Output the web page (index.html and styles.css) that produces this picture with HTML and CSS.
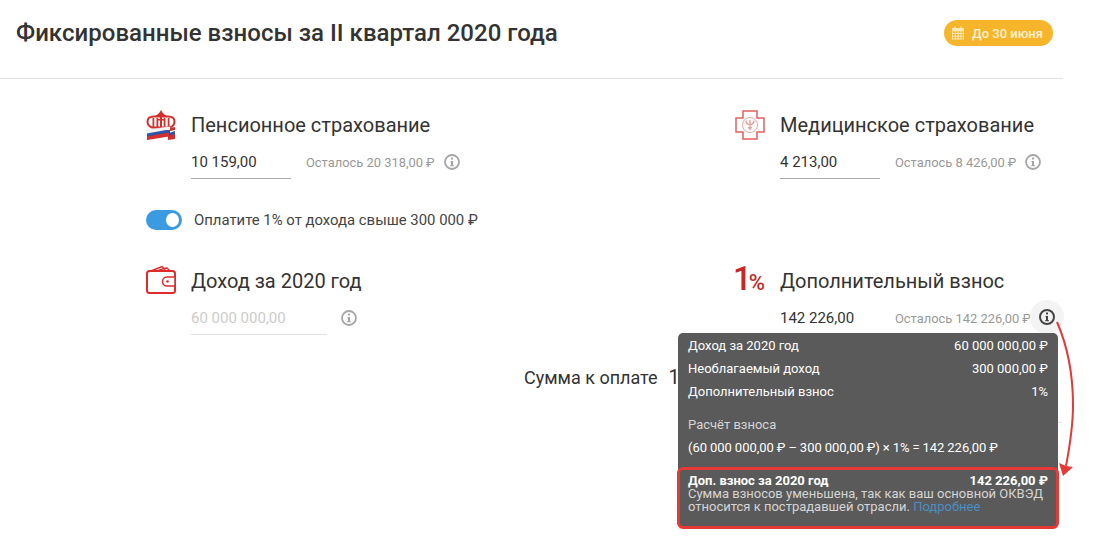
FILE: index.html
```html
<!DOCTYPE html>
<html lang="ru">
<head>
    <meta charset="UTF-8">
    <meta name="viewport" content="width=device-width, initial-scale=1.0">
    <title>Фиксированные взносы</title>
    <link rel="stylesheet" href="styles.css">
</head>
<body>
    <div class="page">
        <div class="header">
            <h1 class="header-title">Фиксированные взносы за II квартал 2020 года</h1>
            <div class="deadline">
                <svg class="deadline-icon" viewBox="0 0 13 14" width="12" height="14">
                    <path fill="#fde9b8" d="M2.500 0h1.400v1.500h5.200V0h1.400v1.500H13V14H0V1.500h2.500zM1 5v2h2.200V5zm3.200 0v2h2V5zm3 0v2h2V5zm3 0v2H12V5zM1 8v2h2.200V8zm3.200 0v2h2V8zm3 0v2h2V8zm3 0v2H12V8zM1 11v2h2.200v-2zm3.200 0v2h2v-2zm3 0v2h2v-2zm3 0v2H12v-2z"/>
                </svg>
                До 30 июня
            </div>
        </div>

        <div class="form">
            <div class="form-row">
                <div class="block">
                    <div class="block-head">
                        <svg class="block-icon" viewBox="0 0 30 30" width="30" height="30">
                            <path fill="none" stroke="#d32f2f" stroke-width="2" d="M8 6.500h14c4 0 6.500 2 6.500 5s-2 5-4.500 6H6c-2.500-1-4.500-3-4.500-6s2.500-5 6.500-5z"/>
                            <path fill="#d32f2f" d="M15 0l1.500 2.500c1 1.500 3 2.500 5 4h-13c2-1.500 4-2.500 5-4zM6.500 8h1.800v9H6.500zM10.500 8h1.800v9h-1.800zM17.700 8h1.800v9h-1.800zM21.700 8h1.800v9h-1.800zM14 7h2v10h-2zM12 9h6v1.500h-6z"/>
                            <path fill="#f4f4f4" stroke="#e5e5e5" stroke-width=".5" d="M1 20.500l19-3.500h4v3.500L1 24z"/>
                            <path fill="#2f55a4" d="M1 23.500L20 20h4v3.500L1 27z"/>
                            <path fill="#d32f2f" d="M1 26.500L20 23h3v3.500L1 30z"/>
                            <path fill="#d32f2f" d="M24 18l5-1v3l-5 1zM22 24l7-2v7l-7 1z"/>
                            <path fill="#2f55a4" d="M23 23l6-2v3l-6 2z"/>
                        </svg>
                        <div class="block-title">Пенсионное страхование</div>
                    </div>
                    <div class="block-body">
                        <div class="amount">10 159,00</div>
                        <div class="left-note">Осталось 20 318,00 ₽</div>
                        <svg class="info" viewBox="0 0 16 16" width="16" height="16">
                            <circle cx="8" cy="8" r="7" fill="none" stroke="currentColor" stroke-width="1.800"/>
                            <path fill="currentColor" d="M7 3.500h2v2H7zM6.500 7H9v4h.8v1.200H6.300V11H7V8.200h-.5z"/>
                        </svg>
                    </div>
                </div>
                <div class="block">
                    <div class="block-head">
                        <svg class="block-icon" viewBox="0 0 30 30" width="30" height="30">
                            <path fill="none" stroke="#e4605f" stroke-width="1.500" d="M8 1h14v7h7v14h-7v7H8v-7H1V8h7z"/>
                            <circle cx="15" cy="15" r="7.500" fill="none" stroke="#f0a5a4" stroke-width="1"/>
                            <path fill="none" stroke="#ea8d8c" stroke-width="1.200" d="M15 10v10M11 10.500c0 3 1.500 4 4 4s4-1 4-4M13 17.500c1 .7 3 .7 4 0"/>
                        </svg>
                        <div class="block-title">Медицинское страхование</div>
                    </div>
                    <div class="block-body">
                        <div class="amount">4 213,00</div>
                        <div class="left-note">Осталось 8 426,00 ₽</div>
                        <svg class="info" viewBox="0 0 16 16" width="16" height="16">
                            <circle cx="8" cy="8" r="7" fill="none" stroke="currentColor" stroke-width="1.800"/>
                            <path fill="currentColor" d="M7 3.500h2v2H7zM6.500 7H9v4h.8v1.200H6.300V11H7V8.200h-.5z"/>
                        </svg>
                    </div>
                </div>
            </div>

            <div class="toggle-row">
                <div class="toggle"><span class="toggle-knob"></span></div>
                <div class="toggle-label">Оплатите 1% от дохода свыше 300 000 ₽</div>
            </div>

            <div class="form-row">
                <div class="block">
                    <div class="block-head">
                        <svg class="block-icon" viewBox="0 0 30 30" width="30" height="30">
                            <rect x="1" y="5" width="28" height="22" rx="2.500" fill="none" stroke="#e02b2b" stroke-width="2"/>
                            <path fill="none" stroke="#e02b2b" stroke-width="1.400" d="M5 5l11-4.500 2 2 3-.5 3 3M11 5l7-2.500 2 2.500"/>
                            <path fill="#fff" stroke="#e02b2b" stroke-width="1.500" d="M29 11h-8a3.500 3.500 0 0 0 0 9h8z"/>
                            <circle cx="21.500" cy="15.500" r="1.300" fill="#e02b2b"/>
                        </svg>
                        <div class="block-title">Доход за 2020 год</div>
                    </div>
                    <div class="block-body">
                        <div class="amount amount-empty">60 000 000,00</div>
                        <svg class="info" viewBox="0 0 16 16" width="16" height="16">
                            <circle cx="8" cy="8" r="7" fill="none" stroke="currentColor" stroke-width="1.800"/>
                            <path fill="currentColor" d="M7 3.500h2v2H7zM6.500 7H9v4h.8v1.200H6.300V11H7V8.200h-.5z"/>
                        </svg>
                    </div>
                </div>
                <div class="block">
                    <div class="block-head">
                        <div class="percent-icon">1<span>%</span></div>
                        <div class="block-title">Дополнительный взнос</div>
                    </div>
                    <div class="block-body">
                        <div class="amount amount-plain">142 226,00</div>
                        <div class="left-note">Осталось 142 226,00 ₽</div>
                        <div class="info-active">
                            <svg class="info info-dark" viewBox="0 0 16 16" width="16" height="16">
                                <circle cx="8" cy="8" r="7" fill="none" stroke="currentColor" stroke-width="2"/>
                                <path fill="currentColor" d="M7 3.500h2v2H7zM6.500 7H9v4h.8v1.200H6.300V11H7V8.200h-.5z"/>
                            </svg>
                        </div>
                    </div>
                </div>
            </div>

            <div class="total">
                <span class="total-label">Сумма к оплате</span>
                <span class="total-value">156 598,00 ₽</span>
            </div>
            <div class="total-line"></div>
        </div>

        <!-- подсказка поверх формы -->
        <div class="tooltip">
            <div class="tooltip-row"><span>Доход за 2020 год</span><span>60 000 000,00 ₽</span></div>
            <div class="tooltip-row"><span>Необлагаемый доход</span><span>300 000,00 ₽</span></div>
            <div class="tooltip-row"><span>Дополнительный взнос</span><span>1%</span></div>
            <div class="tooltip-calc-title">Расчёт взноса</div>
            <div class="tooltip-calc">(60 000 000,00 ₽ – 300 000,00 ₽) × 1% = 142 226,00 ₽</div>
            <div class="tooltip-result">
                <div class="tooltip-sum"><span>Доп. взнос за 2020 год</span><span>142 226,00 ₽</span></div>
                <div class="tooltip-note">Сумма взносов уменьшена, так как ваш основной ОКВЭД относится к пострадавшей отрасли. <a class="tooltip-link" href="#">Подробнее</a></div>
            </div>
        </div>

        <!-- красная стрелка-пометка -->
        <svg class="arrow" viewBox="0 0 30 170" width="30" height="170">
            <path fill="none" stroke="#e53935" stroke-width="2" d="M2 2C12 25 18 55 18 85 18 105 15 125 11 146"/>
            <path fill="#e53935" d="M4 143l7 3 7 1-10 9z"/>
        </svg>
    </div>
</body>
</html>
```

FILE: styles.css
```css
* {
    margin: 0;
    padding: 0;
    box-sizing: border-box;
}

body {
    font-family: Roboto, "Liberation Sans", sans-serif;
    background: white;
    color: #333;
    overflow: hidden;
}

.page {
    width: 1063px;
    height: 548px;
    position: relative;
    overflow: visible;
}

.header {
    height: 79px;
    padding: 0 10px 12px 16px;
    border-bottom: 1px solid #e3e3e3;
    display: flex;
    justify-content: space-between;
    align-items: center;
}

.header-title {
    font-size: 24px;
    font-weight: 500;
    letter-spacing: 0.02px;
    color: #333;
}

.deadline {
    height: 26px;
    padding: 0 10px 0 8px;
    border-radius: 13px;
    background: #f7b52c;
    color: #fdf1d2;
    font-size: 13px;
    font-weight: 500;
    display: flex;
    align-items: center;
    gap: 8px;
}

.form {
    padding: 31px 0 0 146px;
}

.form-row {
    display: flex;
}

.block {
    flex: 0 0 589px;
}

.block + .block {
    flex: 1;
    min-width: 0;
}

.block-head {
    height: 30px;
    display: flex;
    align-items: center;
    gap: 15px;
}

.block-icon {
    flex: none;
}

.block-title {
    font-size: 20px;
    color: #333;
}

.block-body {
    margin-top: 7px;
    padding-left: 45px;
    height: 40px;
    display: flex;
    align-items: flex-start;
    position: relative;
}

.amount {
    flex: none;
    width: 100px;
    height: 32px;
    padding-top: 6px;
    font-size: 15px;
    line-height: 18px;
    color: #333;
    border-bottom: 1px solid #aaa;
}

.amount-plain {
    border-bottom: none;
}

.amount-empty {
    width: 136px;
    color: #ccc;
    border-bottom-color: #e3e3e3;
}

.left-note {
    margin-left: 15px;
    padding-top: 7px;
    font-size: 12.900px;
    line-height: 18px;
    color: #999;
    white-space: nowrap;
}

.info {
    margin: 7px 0 0 9px;
    color: #a6a6a6;
    flex: none;
}

.amount-empty + .info {
    margin-left: 14px;
}

.info-active {
    position: absolute;
    left: 295px;
    top: -3px;
    width: 34px;
    height: 34px;
    border-radius: 50%;
    background: #f3f3f3;
    display: flex;
    align-items: center;
    justify-content: center;
}

.info-dark {
    margin: 0;
    color: #444;
}

.percent-icon {
    flex: none;
    width: 32px;
    margin-left: -2px;
    font-size: 33px;
    line-height: 30px;
    font-weight: 500;
    color: #c62828;
    letter-spacing: -3px;
    white-space: nowrap;
}

.percent-icon span {
    font-size: 22px;
    letter-spacing: 0;
}

.toggle-row {
    margin-top: 22px;
    height: 22px;
    display: flex;
    align-items: center;
    gap: 12px;
}

.toggle {
    width: 36px;
    height: 20px;
    border-radius: 10px;
    background: #3a9be0;
    position: relative;
}

.toggle-knob {
    position: absolute;
    right: 3px;
    top: 3px;
    width: 13px;
    height: 14px;
    border-radius: 50%;
    background: white;
}

.toggle-label {
    font-size: 14.900px;
    color: #444;
}

.form-row + .toggle-row + .form-row {
    margin-top: 35px;
}

.total {
    margin-top: 22px;
    padding-left: 378px;
    display: flex;
    align-items: baseline;
    gap: 11px;
    white-space: nowrap;
}

.total-label {
    font-size: 18px;
}

.total-value {
    font-size: 20px;
}

.total-line {
    height: 1px;
    margin-top: 33px;
    margin-left: 532px;
    background: #e6e6e6;
}

.tooltip {
    position: absolute;
    left: 678px;
    top: 333px;
    width: 380px;
    height: 195px;
    padding: 1px 10px 0;
    border-radius: 5px;
    background: #5a5a5a;
    color: #fff;
    font-size: 13px;
    line-height: 23px;
}

.tooltip-row {
    display: flex;
    justify-content: space-between;
}

.tooltip-calc-title {
    margin-top: 10px;
    color: #d5d5d5;
}

.tooltip-calc {
    word-spacing: -0.3px;
}

.tooltip-result {
    position: absolute;
    left: -1px;
    right: -1px;
    top: 134px;
    height: 62px;
    padding: 4px 8px 0;
    border: 3px solid #e53935;
    border-radius: 6px;
    line-height: 13px;
}

.tooltip-sum {
    display: flex;
    justify-content: space-between;
    font-weight: 700;
}

.tooltip-note {
    color: #d5d5d5;
}

.tooltip-link {
    color: #4a8fc4;
    text-decoration: none;
}

.arrow {
    position: absolute;
    left: 1055px;
    top: 320px;
}
```
